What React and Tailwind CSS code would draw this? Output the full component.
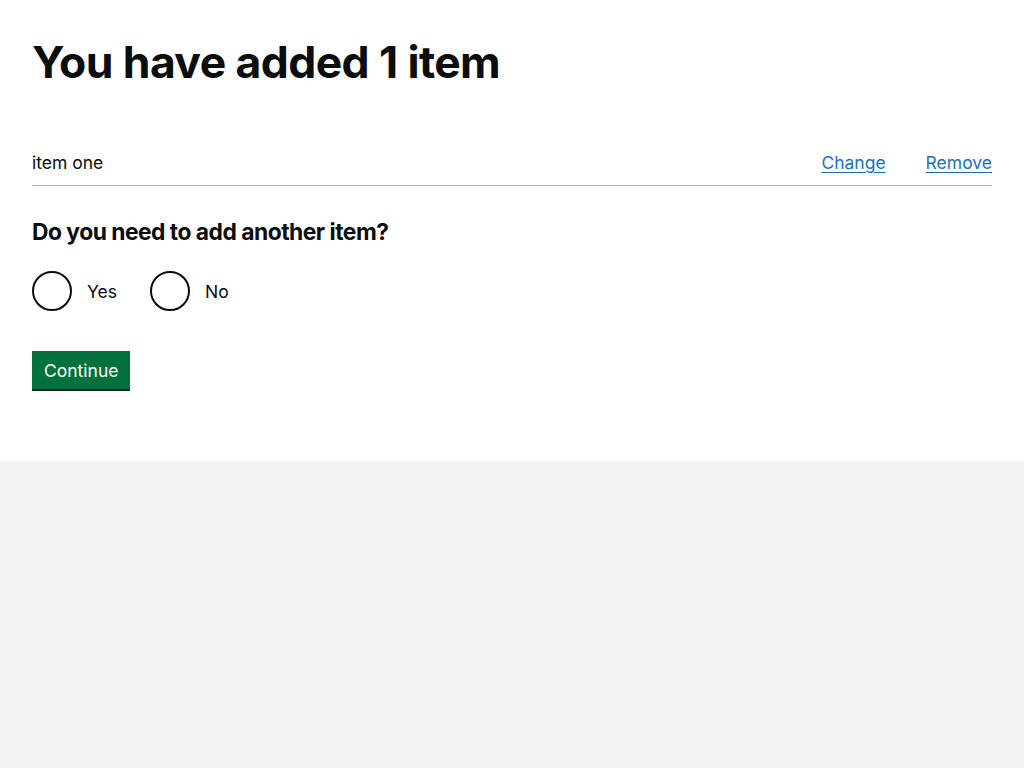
import React from "react";

export default function App() {
  const font = { fontFamily: "Inter, 'Noto Sans', Arial, sans-serif" };
  return (
    <div className="min-h-screen bg-[#f3f2f1] text-[#0b0c0c]" style={font}>
      <div className="bg-white h-[461px] px-[32px] pt-[37px]">
        <h1 className="text-[44.5px] leading-[50px] font-bold tracking-[-0.6px] m-0">You have added 1 item</h1>
        <div className="mt-[53px] flex items-center border-b border-[#b1b4b6] py-[10px] text-[17.5px] leading-[25px]">
          <div className="flex-1">item one</div>
          <a href="#" className="text-[#1d70b8] underline underline-offset-[3px] mr-[40px]">Change</a>
          <a href="#" className="text-[#1d70b8] underline underline-offset-[3px]">Remove</a>
        </div>
        <h2 className="mt-[31px] text-[22.8px] leading-[30px] font-bold tracking-[-0.5px]">Do you need to add another item?</h2>
        <div className="mt-[24px] flex items-center">
          <label className="flex items-center mr-[20px]">
            <span className="w-[40px] h-[40px] rounded-full border-2 border-[#0b0c0c] box-border"></span>
            <span className="pl-[15px] pr-[13px] text-[17.5px] leading-[25px]">Yes</span>
          </label>
          <label className="flex items-center">
            <span className="w-[40px] h-[40px] rounded-full border-2 border-[#0b0c0c] box-border"></span>
            <span className="pl-[15px] pr-[15px] text-[17.5px] leading-[25px]">No</span>
          </label>
        </div>
        <button className="mt-[40px] bg-[#00703c] text-white text-[17.5px] leading-[25px] px-[12px] pt-[7px] pb-[6px] shadow-[0_2px_0_#002d18] block">Continue</button>
      </div>
    </div>
  );
}
